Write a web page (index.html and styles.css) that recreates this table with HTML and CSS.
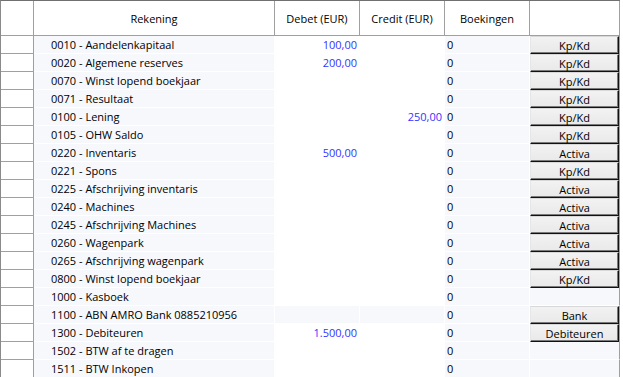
FILE: index.html
```html
<!DOCTYPE html>
<html lang="nl">
<head>
  <meta charset="UTF-8" />
  <title>Rekeningen</title>
  <link rel="stylesheet" href="styles.css">
</head>
<body>

  <!-- Grootboekrekeningen -->
  <table class="ledger">
    <thead>
      <tr>
        <th class="c-sel"></th>
        <th class="c-name">Rekening</th>
        <th class="c-amt">Debet (EUR)</th>
        <th class="c-amt">Credit (EUR)</th>
        <th class="c-amt">Boekingen</th>
        <th class="c-act"></th>
      </tr>
    </thead>
    <tbody>
      <tr><td class="sel"></td><td class="name">0010 - Aandelenkapitaal</td><td class="amt">100,00</td><td class="amt"></td><td class="cnt">0</td><td class="act has-btn"><button class="btn">Kp/Kd</button></td></tr>
      <tr><td class="sel"></td><td class="name">0020 - Algemene reserves</td><td class="amt">200,00</td><td class="amt"></td><td class="cnt">0</td><td class="act has-btn"><button class="btn">Kp/Kd</button></td></tr>
      <tr><td class="sel"></td><td class="name">0070 - Winst lopend boekjaar</td><td class="amt"></td><td class="amt"></td><td class="cnt">0</td><td class="act has-btn"><button class="btn">Kp/Kd</button></td></tr>
      <tr><td class="sel"></td><td class="name">0071 - Resultaat</td><td class="amt"></td><td class="amt"></td><td class="cnt">0</td><td class="act has-btn"><button class="btn">Kp/Kd</button></td></tr>
      <tr><td class="sel"></td><td class="name">0100 - Lening</td><td class="amt"></td><td class="amt">250,00</td><td class="cnt">0</td><td class="act has-btn"><button class="btn">Kp/Kd</button></td></tr>
      <tr><td class="sel"></td><td class="name">0105 - OHW Saldo</td><td class="amt"></td><td class="amt"></td><td class="cnt">0</td><td class="act has-btn"><button class="btn">Kp/Kd</button></td></tr>
      <tr><td class="sel"></td><td class="name">0220 - Inventaris</td><td class="amt">500,00</td><td class="amt"></td><td class="cnt">0</td><td class="act has-btn"><button class="btn">Activa</button></td></tr>
      <tr><td class="sel"></td><td class="name">0221 - Spons</td><td class="amt"></td><td class="amt"></td><td class="cnt">0</td><td class="act has-btn"><button class="btn">Kp/Kd</button></td></tr>
      <tr><td class="sel"></td><td class="name">0225 - Afschrijving inventaris</td><td class="amt"></td><td class="amt"></td><td class="cnt">0</td><td class="act has-btn"><button class="btn">Activa</button></td></tr>
      <tr><td class="sel"></td><td class="name">0240 - Machines</td><td class="amt"></td><td class="amt"></td><td class="cnt">0</td><td class="act has-btn"><button class="btn">Activa</button></td></tr>
      <tr><td class="sel"></td><td class="name">0245 - Afschrijving Machines</td><td class="amt"></td><td class="amt"></td><td class="cnt">0</td><td class="act has-btn"><button class="btn">Activa</button></td></tr>
      <tr><td class="sel"></td><td class="name">0260 - Wagenpark</td><td class="amt"></td><td class="amt"></td><td class="cnt">0</td><td class="act has-btn"><button class="btn">Activa</button></td></tr>
      <tr><td class="sel"></td><td class="name">0265 - Afschrijving wagenpark</td><td class="amt"></td><td class="amt"></td><td class="cnt">0</td><td class="act has-btn"><button class="btn">Activa</button></td></tr>
      <tr><td class="sel"></td><td class="name">0800 - Winst lopend boekjaar</td><td class="amt"></td><td class="amt"></td><td class="cnt">0</td><td class="act has-btn"><button class="btn">Kp/Kd</button></td></tr>
      <tr><td class="sel"></td><td class="name">1000 - Kasboek</td><td class="amt"></td><td class="amt"></td><td class="cnt">0</td><td class="act"></td></tr>
      <tr><td class="sel"></td><td class="name">1100 - ABN AMRO Bank 0885210956</td><td class="amt tint"></td><td class="amt tint"></td><td class="cnt">0</td><td class="act has-btn"><button class="btn">Bank</button></td></tr>
      <tr><td class="sel"></td><td class="name">1300 - Debiteuren</td><td class="amt">1.500,00</td><td class="amt"></td><td class="cnt">0</td><td class="act has-btn"><button class="btn">Debiteuren</button></td></tr>
      <tr><td class="sel"></td><td class="name">1502 - BTW af te dragen</td><td class="amt"></td><td class="amt"></td><td class="cnt">0</td><td class="act"></td></tr>
      <tr><td class="sel"></td><td class="name">1511 - BTW Inkopen</td><td class="amt"></td><td class="amt"></td><td class="cnt">0</td><td class="act"></td></tr>
    </tbody>
  </table>

</body>
</html>
```

FILE: styles.css
```css
* { margin: 0; padding: 0; box-sizing: border-box; }

body {
  background: #fff;
  font-family: 'Open Sans', 'Liberation Sans', sans-serif;
  font-size: 11px;
  color: #000;
  overflow: hidden;
}

.ledger {
  width: 620px;
  table-layout: fixed;
  border-spacing: 0;
  border-top: 1px solid #707070;
  border-left: 1px solid #8a8a8a;
}

/* header */
.ledger th {
  height: 35px;
  font-weight: 400;
  color: #000;
  text-align: center;
  vertical-align: middle;
  border-right: 1px solid #a0a0a0;
  border-bottom: 1px solid #a0a0a0;
  padding-top: 1px;
}
.c-sel { width: 33px; }
.c-name { width: 241px; }
.c-amt { width: 85px; }
.c-act { width: 90px; }

/* rows */
.ledger td {
  height: 18px;
  line-height: 17px;
  white-space: nowrap;
  overflow: hidden;
  border-bottom: 1px solid #fff;
  border-right: 1px solid #fff;
  background: #f7f8fc;
}

.ledger td.sel {
  background: #fff;
  border-right-color: #a0a0a0;
  border-bottom-color: #a0a0a0;
}

.ledger td.name { padding-left: 17px; }

.ledger td.amt {
  background: #fff;
  text-align: right;
  padding-right: 2px;
  color: #3333ff;
}
.ledger td.amt.tint { background: #f7f8fc; }

.ledger td.cnt { padding-left: 2px; }

.ledger td.act { border-right-color: #a0a0a0; }
.ledger td.has-btn { border-bottom: none; padding: 0; vertical-align: top; }

.btn {
  display: block;
  width: 100%;
  height: 18px;
  font-family: inherit;
  font-size: 11px;
  color: #000;
  line-height: 15px;
  background: linear-gradient(#f2f2f2, #e9e9e9);
  border: 1px solid;
  border-color: #d8d8d8 #111 #111 #e6e6e6;
  box-shadow: inset -1px -1px 0 #7a7a7a;
  cursor: pointer;
}
```
